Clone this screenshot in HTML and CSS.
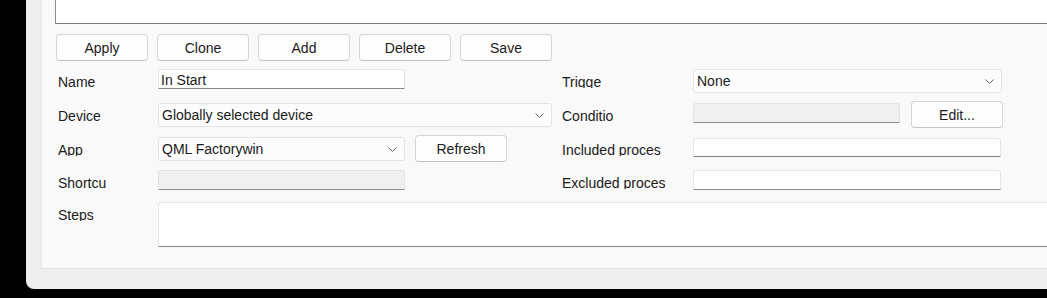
FILE: index.html
```html
<!DOCTYPE html>
<html lang="en">
<head>
<meta charset="utf-8" />
<title>Shortcut editor</title>
<link rel="stylesheet" href="styles.css">
</head>
<body>
	<div class="window">
		<div class="panel">
			<div class="notes"></div>

			<div class="toolbar">
				<button class="btn">Apply</button>
				<button class="btn">Clone</button>
				<button class="btn">Add</button>
				<button class="btn">Delete</button>
				<button class="btn">Save</button>
			</div>

			<div class="form">
				<!-- row 1 -->
				<div class="label">Name</div>
				<div class="cell"><div class="input w-short">In Start</div></div>
				<div class="label right">Trigge</div>
				<div class="cell">
					<div class="combo w-right">None
						<svg class="chev" width="9" height="5" viewBox="0 0 9 5"><polyline points="0.5,0.5 4.5,4.5 8.5,0.5" fill="none" stroke="#606060" stroke-width="1"/></svg>
					</div>
				</div>
				<div></div>

				<!-- row 2 -->
				<div class="label">Device</div>
				<div class="cell">
					<div class="combo w-long">Globally selected device
						<svg class="chev" width="9" height="5" viewBox="0 0 9 5"><polyline points="0.5,0.5 4.5,4.5 8.5,0.5" fill="none" stroke="#606060" stroke-width="1"/></svg>
					</div>
				</div>
				<div class="label right">Conditio</div>
				<div class="cell">
					<div class="input disabled w-cond"></div>
					<button class="btn lift">Edit...</button>
				</div>
				<div></div>

				<!-- row 3 -->
				<div class="label">App</div>
				<div class="cell">
					<div class="combo w-short">QML Factorywin
						<svg class="chev" width="9" height="5" viewBox="0 0 9 5"><polyline points="0.5,0.5 4.5,4.5 8.5,0.5" fill="none" stroke="#606060" stroke-width="1"/></svg>
					</div>
					<button class="btn lift">Refresh</button>
				</div>
				<div class="label right">Included proces</div>
				<div class="cell"><div class="input w-proc drop"></div></div>
				<div></div>

				<!-- row 4 -->
				<div class="label">Shortcu</div>
				<div class="cell"><div class="input disabled w-short"></div></div>
				<div class="label right">Excluded proces</div>
				<div class="cell"><div class="input w-proc"></div></div>
				<div></div>

				<!-- row 5 -->
				<div class="label">Steps</div>
				<div class="steps"></div>
			</div>
		</div>
	</div>
</body>
</html>
```

FILE: styles.css
```css
body {
	margin: 0;
	width: 1047px;
	height: 298px;
	overflow: hidden;
	background: #000;
	font-family: "Liberation Sans", Arial, sans-serif;
	font-size: 14px;
	color: #1b1b1b;
}

.window {
	margin-left: 26px;
	height: 289px;
	padding-left: 15px;
	background: #eeeeee;
	border-bottom-left-radius: 8px;
	box-sizing: border-box;
}

.panel {
	height: 269px;
	padding-left: 13px;
	background: #f9f9f9;
	border-left: 1px solid #e6e6e6;
	border-bottom: 1px solid #e3e3e3;
	box-sizing: border-box;
}

/* description box, scrolled off the top */
.notes {
	height: 24px;
	background: #fff;
	border-left: 1px solid #8d8d8d;
	border-bottom: 1px solid #7d7d7d;
	box-sizing: border-box;
}

.toolbar {
	display: flex;
	gap: 9px;
	margin-top: 10px;
	padding-left: 1px;
}

.btn {
	width: 92px;
	height: 27px;
	padding: 0;
	font: inherit;
	color: inherit;
	background: #fdfdfd;
	border: 1px solid #d6d6d6;
	border-bottom-color: #c2c2c2;
	border-radius: 4px;
	box-sizing: border-box;
}

.form {
	display: grid;
	grid-template-columns: 103px 394px 141px 310px 1fr;
	grid-template-rows: 34px 34px 33px 32px 45px;
	margin-top: 8px;
}

/* labels are squeezed: the bottom of the glyphs is cut */
.label {
	margin-top: 5px;
	padding-left: 3px;
	height: 14px;
	line-height: 16px;
	overflow: hidden;
	white-space: nowrap;
}
.label.right {
	padding-left: 10px;
}

.cell {
	display: flex;
	align-items: flex-start;
	gap: 10px;
}
.cell .lift {
	margin-top: -2px;
}
.cell .w-cond + .lift {
	margin-left: 1px;
}

.input {
	height: 20px;
	line-height: 19px;
	padding: 1px 0 0 2px;
	background: #fff;
	border: 1px solid #e6e6e6;
	border-bottom-color: #868686;
	border-radius: 3px 3px 0 0;
	box-sizing: border-box;
	white-space: nowrap;
}
.input.disabled {
	background: #f0f0f0;
	border-color: #e2e2e2;
	border-bottom-color: #8e8e8e;
}
.input.drop {
	margin-top: 1px;
	height: 19px;
}

.combo {
	position: relative;
	height: 24px;
	line-height: 22px;
	padding-left: 3px;
	background: #fcfcfc;
	border: 1px solid #e4e4e4;
	border-radius: 3px;
	box-sizing: border-box;
	white-space: nowrap;
}
.chev {
	position: absolute;
	right: 7px;
	top: 9px;
}

.w-short { width: 247px; }
.w-long { width: 394px; }
.w-right { width: 309px; }
.w-cond { width: 207px; }
.w-proc { width: 308px; }

.steps {
	grid-column: 2 / -1;
	background: #fff;
	border: 1px solid #e6e6e6;
	border-right: none;
	border-bottom-color: #868686;
	border-radius: 3px 0 0 0;
}
```
